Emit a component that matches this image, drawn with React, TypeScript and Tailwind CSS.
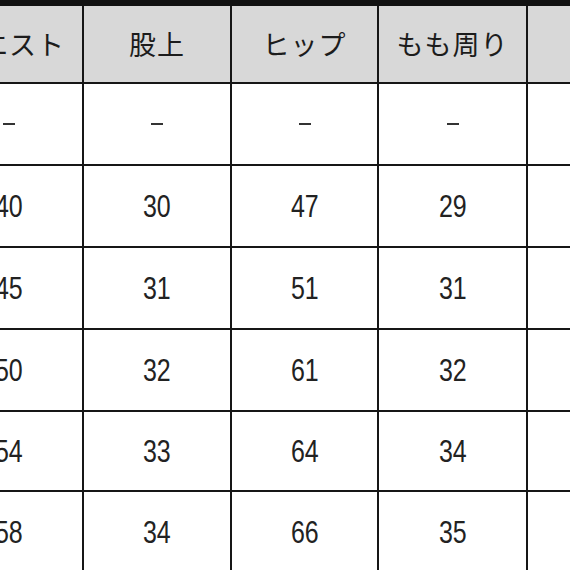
const headers = ['ウエスト', '股上', 'ヒップ', 'もも周り', '']

const rows = [
  { h: 'h-[82px]', cells: ['–', '–', '–', '–', ''] },
  { h: 'h-[82px]', cells: ['40', '30', '47', '29', ''] },
  { h: 'h-[82px]', cells: ['45', '31', '51', '31', ''] },
  { h: 'h-[82px]', cells: ['50', '32', '61', '32', ''] },
  { h: 'h-[80px]', cells: ['54', '33', '64', '34', ''] },
  { h: 'h-[82px]', cells: ['58', '34', '66', '35', ''] },
]

const colW = ['w-[148px]', 'w-[148px]', 'w-[147px]', 'w-[149px]', 'w-[148px]']

const jp = { fontFamily: '"Noto Sans CJK JP", "Noto Sans", sans-serif' }
const num = { fontFamily: '"Liberation Sans", Arial, sans-serif' }

export default function App() {
  return (
    <div className="w-[570px] h-[570px] overflow-hidden bg-white">
      <div className="h-[6px] bg-[#111]" />
      <div className="-ml-[64px] flex flex-col">
        <div className="flex h-[78px]">
          {headers.map((t, i) => (
            <div
              key={i}
              className={`${colW[i]} shrink-0 flex items-center justify-center bg-[#d8d8d8] border-r-2 border-b-2 border-[#161616] text-[27px] tracking-[1px] text-[#1c1c1c]`}
              style={jp}
            >
              {t}
            </div>
          ))}
        </div>
        {rows.map((r, ri) => (
          <div key={ri} className={`flex ${r.h}`}>
            {r.cells.map((c, i) => (
              <div
                key={i}
                className={`${colW[i]} shrink-0 flex items-center justify-center border-r-2 border-b-2 border-[#161616] text-[#222]`}
              >
                {c === '–' ? (
                  <span className="block w-[12px] h-[2px] bg-[#333]" />
                ) : c ? (
                  <span className="inline-block text-[32px] leading-none scale-x-[0.78]" style={num}>
                    {c}
                  </span>
                ) : null}
              </div>
            ))}
          </div>
        ))}
      </div>
    </div>
  )
}
